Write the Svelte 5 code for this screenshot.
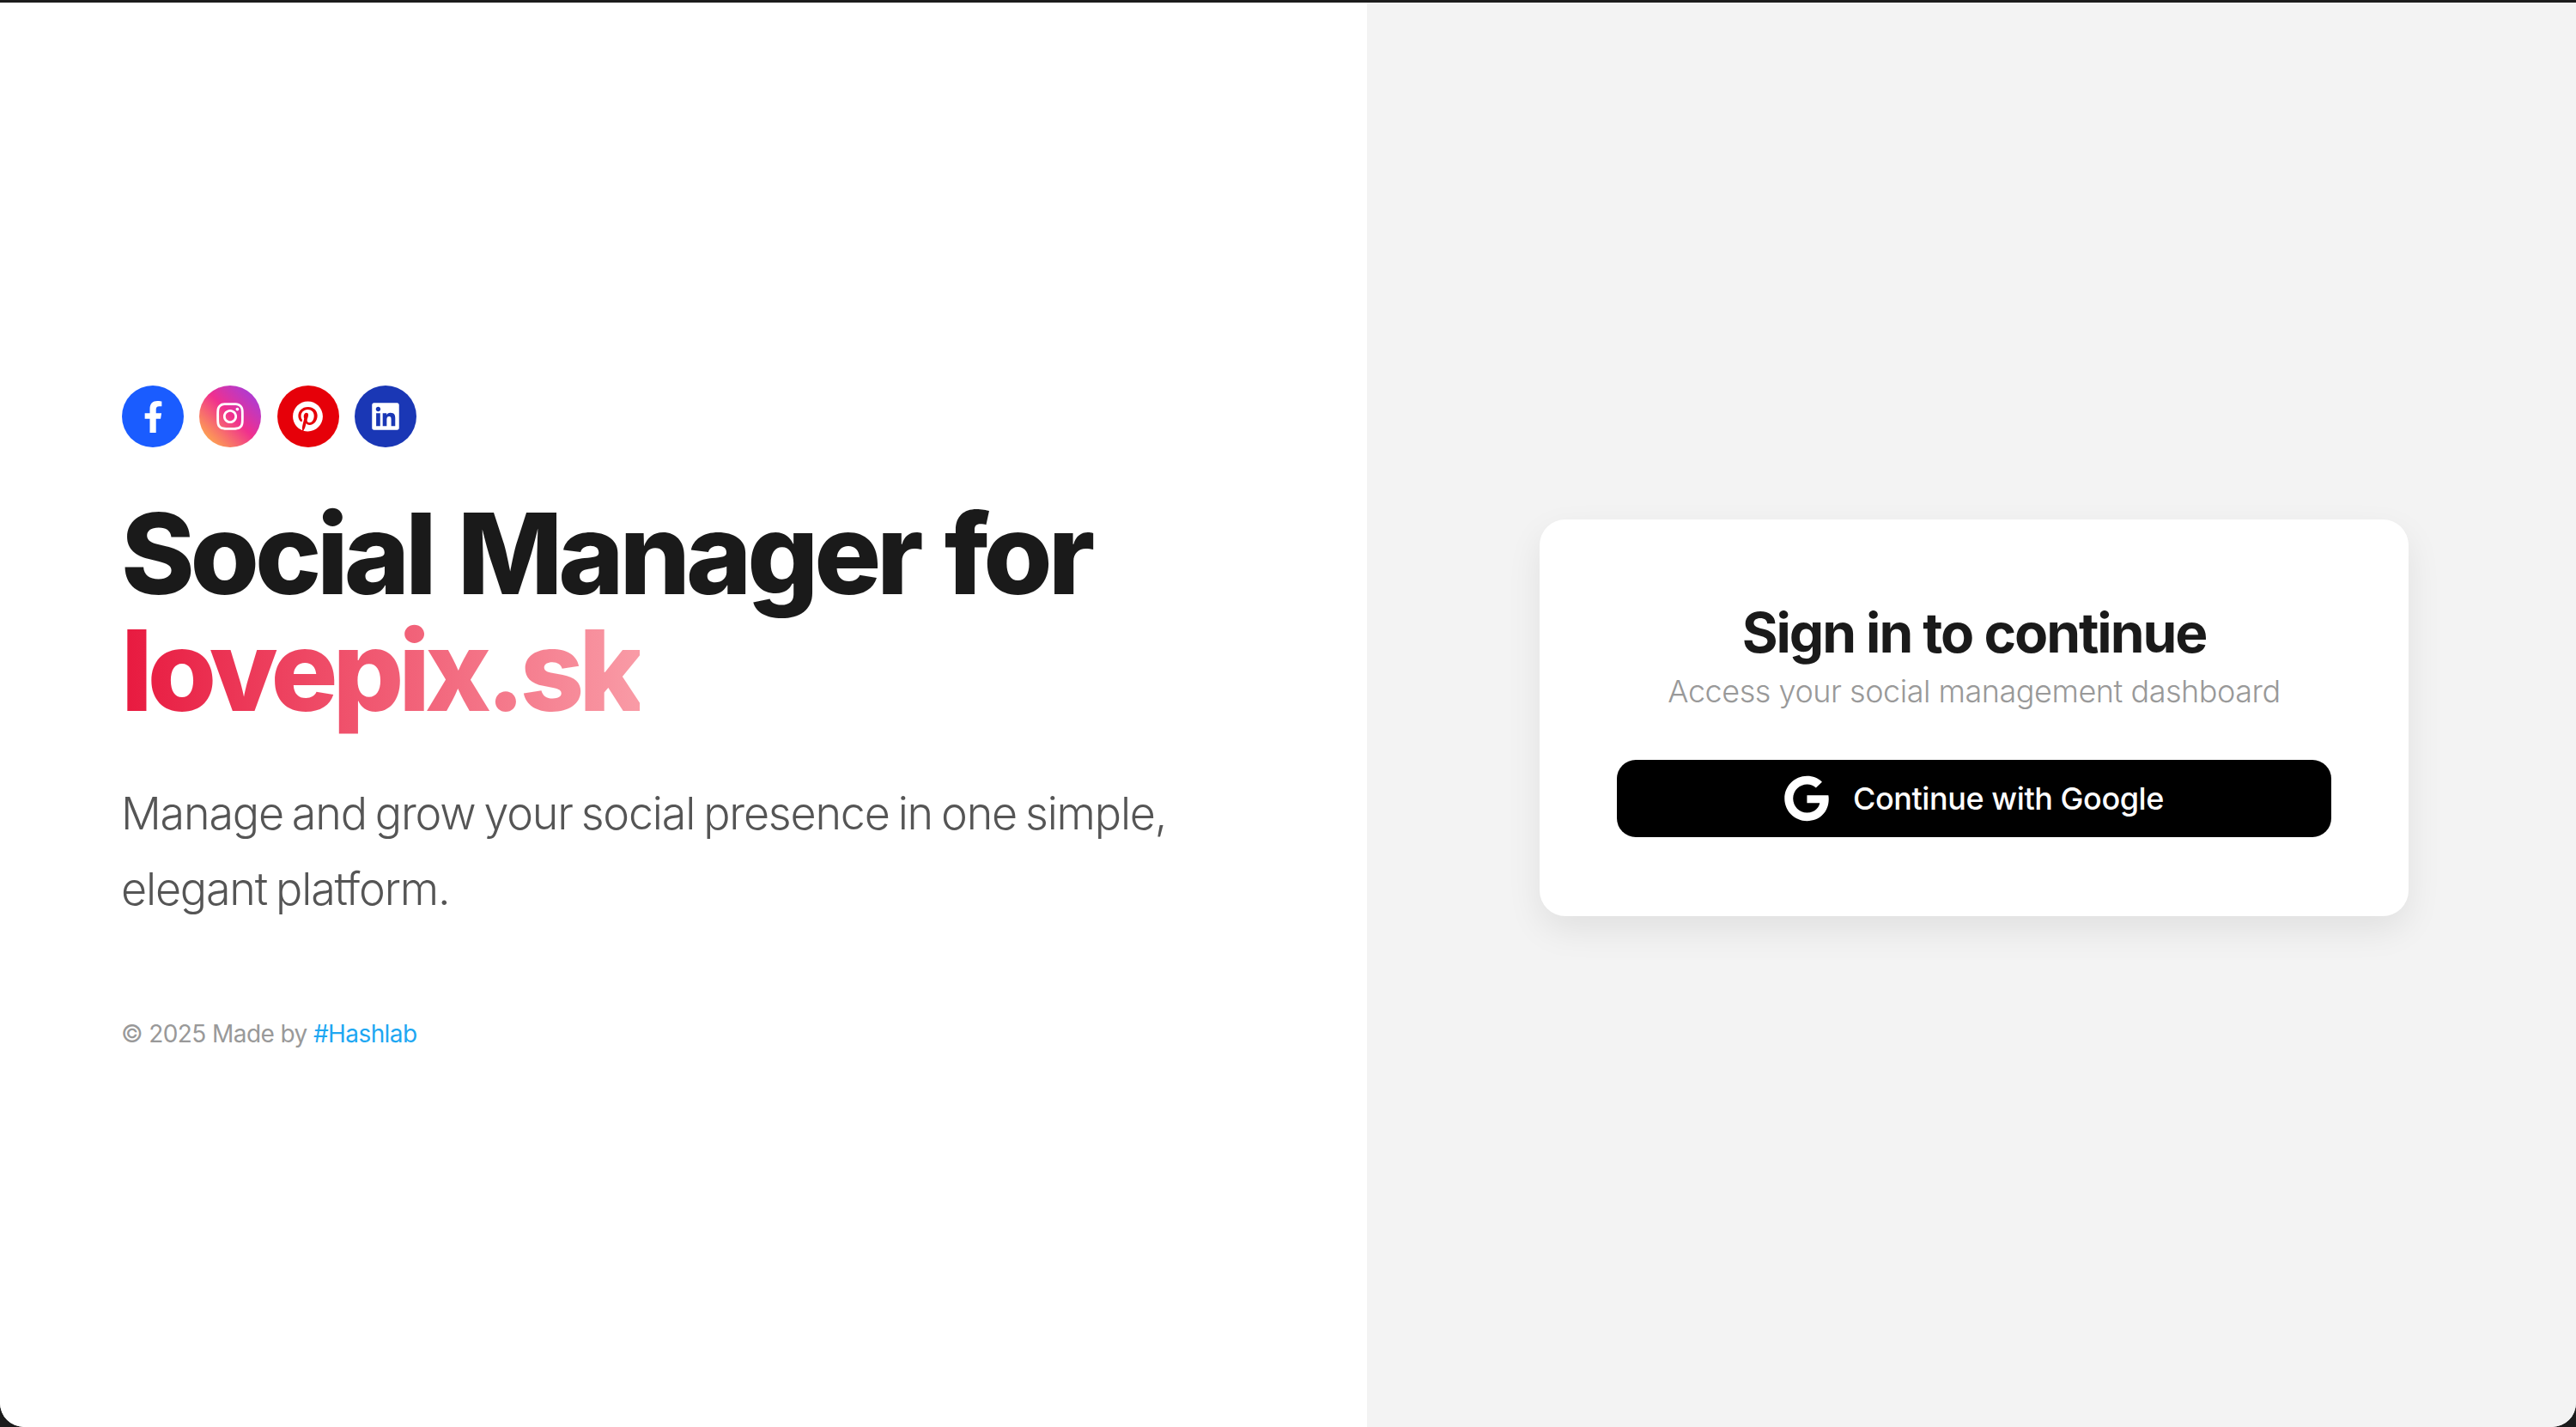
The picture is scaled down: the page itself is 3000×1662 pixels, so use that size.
<script>
  const socials = [
    { cls: 'fb', vb: '0 0 320 512', w: 23, h: 37, d: 'M279.14 288l14.22-92.66h-88.91v-60.13c0-25.35 12.42-50.06 52.24-50.06h40.42V6.26S260.43 0 225.36 0c-73.22 0-121.08 44.38-121.08 124.72v70.62H22.89V288h81.39v224h100.17V288z' },
    { cls: 'ig', vb: '0 0 448 512', w: 32, h: 36, d: 'M224.1 141c-63.6 0-114.9 51.3-114.9 114.9s51.3 114.9 114.9 114.9S339 319.5 339 255.9 287.7 141 224.1 141zm0 189.6c-41.1 0-74.7-33.5-74.7-74.7s33.5-74.7 74.7-74.7 74.7 33.5 74.7 74.7-33.6 74.7-74.7 74.7zm146.4-194.3c0 14.9-12 26.8-26.8 26.8-14.9 0-26.8-12-26.8-26.8s12-26.8 26.8-26.8 26.8 12 26.8 26.8zm76.1 27.2c-1.7-35.9-9.9-67.7-36.2-93.9-26.2-26.2-58-34.4-93.9-36.2-37-2.1-147.9-2.1-184.9 0-35.8 1.7-67.6 9.9-93.9 36.1s-34.4 58-36.2 93.9c-2.1 37-2.1 147.9 0 184.9 1.7 35.9 9.9 67.7 36.2 93.9s58 34.4 93.9 36.2c37 2.1 147.9 2.1 184.9 0 35.9-1.7 67.7-9.9 93.9-36.2 26.2-26.2 34.4-58 36.2-93.9 2.1-37 2.1-147.8 0-184.8zM398.8 388c-7.8 19.6-22.9 34.7-42.6 42.6-29.5 11.7-99.5 9-132.1 9s-102.7 2.6-132.1-9c-19.6-7.8-34.7-22.9-42.6-42.6-11.7-29.5-9-99.5-9-132.1s-2.6-102.7 9-132.1c7.8-19.6 22.9-34.7 42.6-42.6 29.5-11.7 99.5-9 132.1-9s102.7-2.6 132.1 9c19.6 7.8 34.7 22.9 42.6 42.6 11.7 29.5 9 99.5 9 132.1s2.7 102.7-9 132.1z' },
    { cls: 'pin', vb: '0 0 496 512', w: 35, h: 36, d: 'M496 256c0 137-111 248-248 248-25.6 0-50.2-3.9-73.4-11.1 10.1-16.5 25.2-43.5 30.8-65 3-11.6 15.4-59 15.4-59 8.1 15.4 31.7 28.5 56.8 28.5 74.8 0 128.7-68.8 128.7-154.3 0-81.9-66.9-143.2-152.9-143.2-107 0-163.9 71.8-163.9 150.1 0 36.4 19.4 81.7 50.3 96.1 4.7 2.2 7.2 1.2 8.3-3.3.8-3.4 5-20.3 6.9-28.1.6-2.5.3-4.7-1.7-7.1-10.1-12.5-18.3-35.3-18.3-56.6 0-54.7 41.4-107.6 112-107.6 60.9 0 103.6 41.5 103.6 100.9 0 67.1-33.9 113.6-78 113.6-24.3 0-42.6-20.1-36.7-44.8 7-29.5 20.5-61.3 20.5-82.6 0-19-10.2-34.9-31.4-34.9-24.9 0-44.9 25.7-44.9 60.2 0 22 7.4 36.8 7.4 36.8s-24.5 103.8-29 123.2c-5 21.4-3 51.6-.9 71.2C65.4 450.9 0 361.1 0 256 0 119 111 8 248 8s248 111 248 248z' },
    { cls: 'li', vb: '0 0 448 512', w: 32, h: 36, d: 'M416 32H31.9C14.3 32 0 46.5 0 64.3v383.4C0 465.5 14.3 480 31.9 480H416c17.6 0 32-14.5 32-32.3V64.3c0-17.8-14.4-32.3-32-32.3zM135.4 416H69V202.2h66.5V416zm-33.2-243c-21.3 0-38.5-17.3-38.5-38.5S80.9 96 102.2 96c21.2 0 38.5 17.3 38.5 38.5 0 21.3-17.2 38.5-38.5 38.5zm282.1 243h-66.4V312c0-24.8-.5-56.7-34.5-56.7-34.6 0-39.9 27-39.9 54.9V416h-66.4V202.2h63.7v29.2h.9c8.9-16.8 30.6-34.5 62.9-34.5 67.2 0 79.7 39.8 79.7 91.6V416z' }
  ];
</script>

<div class="frame">
  <main class="page">
    <section class="left">
      <div class="socials">
        {#each socials as s}
          <div class="circle {s.cls}">
            <svg viewBox={s.vb} width={s.w} height={s.h} fill="#fff"><path d={s.d} /></svg>
          </div>
        {/each}
      </div>
      <h1>Social Manager for<br /><span class="brand">lovepix.sk</span></h1>
      <p class="lead">Manage and grow your social presence in one simple, elegant platform.</p>
      <p class="foot">© 2025 Made by <span class="link">#Hashlab</span></p>
    </section>
    <section class="right">
      <div class="card">
        <h2>Sign in to continue</h2>
        <p class="sub">Access your social management dashboard</p>
        <button class="google">
          <svg viewBox="0 0 488 512" width="52" height="54" fill="#fff"><path d="M488 261.8C488 403.3 391.1 504 248 504 110.8 504 0 393.2 0 256S110.8 8 248 8c66.8 0 123 24.5 166.3 64.9l-67.5 64.9C258.5 52.6 94.3 116.6 94.3 256c0 86.5 69.1 156.6 153.7 156.6 98.2 0 135-70.4 140.8-106.9H248v-85.3h236.1c2.3 12.7 3.9 24.9 3.9 41.4z" /></svg>
          <span>Continue with Google</span>
        </button>
      </div>
    </section>
  </main>
</div>

<style>
  :global(body) { margin: 0; background: #111; }
  .frame {
    width: 3000px;
    height: 1662px;
    padding-top: 3px;
    box-sizing: border-box;
    background: #1c1c1c;
    font-family: Inter, "Liberation Sans", sans-serif;
  }
  .page {
    height: 100%;
    display: grid;
    grid-template-columns: 1592px 1408px;
    border-radius: 0 0 28px 28px;
    overflow: hidden;
    background: #fff;
  }
  .left {
    background: #fff;
    padding-left: 141px;
    padding-top: 8px;
    display: flex;
    flex-direction: column;
    justify-content: center;
  }
  .socials { display: flex; gap: 18.4px; margin: 0 0 56px 1px; }
  .circle {
    width: 72px;
    height: 72px;
    border-radius: 50%;
    display: flex;
    align-items: center;
    justify-content: center;
  }
  .fb { background: #1a5cff; }
  .ig { background: linear-gradient(45deg, #ffb04a 8%, #f0308e 52%, #a43ddd 92%); }
  .pin { background: #e60009; }
  .li { background: #1a37b5; }
  h1 {
    margin: 0 0 55px;
    font-size: 130px;
    line-height: 136px;
    font-weight: 800;
    letter-spacing: -0.04em;
    word-spacing: 6px;
    color: #1a1a1a;
  }
  .brand {
    letter-spacing: -0.047em;
    background: linear-gradient(90deg, #e8193f, #f99ba6);
    -webkit-background-clip: text;
    background-clip: text;
    color: transparent;
  }
  .lead {
    margin: 0 0 104px;
    width: 1300px;
    font-size: 52px;
    line-height: 88px;
    font-weight: 300;
    letter-spacing: -0.023em;
    word-spacing: -3.4px;
    color: #555;
  }
  .foot { margin: 0; font-size: 28px; line-height: 40px; color: #999; letter-spacing: -0.021em; }
  .link { color: #1ea7f2; }
  .right {
    background: #f3f3f3;
    padding: 6px 0 0 6px;
    display: flex;
    align-items: center;
    justify-content: center;
  }
  .card {
    width: 1012px;
    box-sizing: border-box;
    padding: 90px 90px 92px;
    background: #fff;
    border-radius: 30px;
    box-shadow: 0 16px 40px rgba(0, 0, 0, 0.08);
    text-align: center;
  }
  h2 {
    margin: 0;
    font-size: 64px;
    line-height: 84px;
    font-weight: 650;
    letter-spacing: -0.032em;
    color: #1a1a1a;
  }
  .sub { margin: 0 0 54px; font-size: 36px; line-height: 52px; font-weight: 300; letter-spacing: -0.013em; color: #999; }
  .google {
    width: 100%;
    height: 90px;
    border: 0;
    border-radius: 22px;
    background: #000;
    color: #fff;
    display: flex;
    align-items: center;
    justify-content: center;
    gap: 28px;
    font: 450 36px Inter, "Liberation Sans", sans-serif;
    letter-spacing: -0.012em;
  }
</style>
